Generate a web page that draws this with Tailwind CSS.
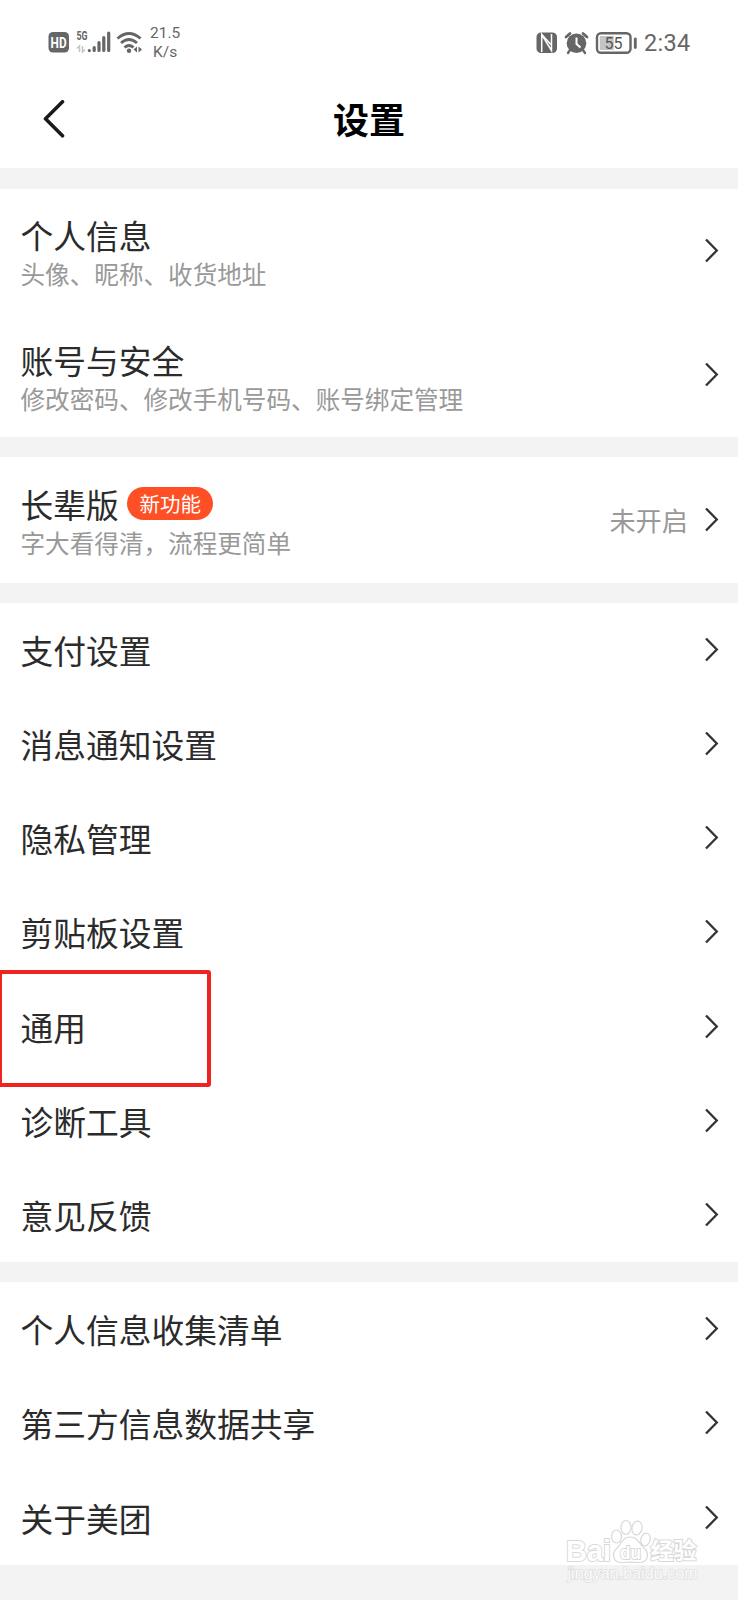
<!DOCTYPE html>
<html lang="zh-CN">
<head>
<meta charset="utf-8">
<title>设置</title>
<script src="https://cdn.jsdelivr.net/npm/@tailwindcss/browser@4"></script>
</head>
<body class="relative h-[1600px] w-[738px] overflow-hidden bg-[#f3f3f3] font-['Noto_Sans_CJK_SC',sans-serif] text-[#2b2b2b]">
<svg class="hidden"><symbol id="chev" viewBox="0 0 14 24"><path d="M1 0.500L11.800 11.500L1 22.500" fill="none" stroke="#333" stroke-width="2.300"/></symbol></svg>

<div class="h-[168px] bg-white">
  <header class="flex h-[84px] items-center justify-between pr-[48px] pl-[48px] text-[#666]">
    <div class="flex items-center">
      <svg width="98" height="60" viewBox="0 0 98 60">
        <rect x="0.5" y="20" width="20.500" height="20.500" rx="4.500" fill="#666"/>
        <text x="2.600" y="35.500" font-family="Roboto" font-weight="700" font-size="14" textLength="16" lengthAdjust="spacingAndGlyphs" fill="#fff">HD</text>
        <text x="28.500" y="28.300" font-family="Roboto" font-weight="700" font-size="12" textLength="11" lengthAdjust="spacingAndGlyphs" fill="#666">5G</text>
        <path d="M31.500 40V34L29 36.500M34.500 34V40L37 37.500" fill="none" stroke="#c4c4c4" stroke-width="1.500"/>
        <g stroke="#666" stroke-width="3.200" stroke-linecap="round">
          <path d="M41.300 38.500V38.600M46.200 38.500V35.500M51 38.500V30.500M55.800 38.500V25.500M60.700 38.500V21"/>
        </g>
        <g fill="none" stroke="#666" stroke-width="2.800">
          <path d="M69.500 26.500Q81 16.500 92.500 26.500M73 31Q81 24 89 31M76.500 35.500Q81 31.500 85.500 35.500"/>
        </g>
        <circle cx="81" cy="38.800" r="2.200" fill="#666"/>
        <path d="M89 34.500V40.500L85.500 37.500ZM90.500 34.500V40.500L94 37.500Z" fill="#666"/>
      </svg>
      <div class="ml-[4px] pt-px text-center font-[Roboto] text-[15.500px] leading-[18.500px]">21.5<br>K/s</div>
    </div>
    <div class="flex items-center pt-px">
      <svg width="102" height="60" viewBox="0 0 102 60">
        <rect x="0.500" y="19.500" width="20.500" height="20.500" rx="4.500" fill="#666"/>
        <path d="M5.700 39V21.500L15.500 37.500V21" fill="none" stroke="#fff" stroke-width="1.500"/>
        <path d="M5.700 21.500L15 31.500" fill="none" stroke="#fff" stroke-width="1.500"/>
        <circle cx="40.500" cy="30.300" r="9.800" fill="#666"/>
        <path d="M34 37L32 40M47 37L49 40" stroke="#666" stroke-width="2.300" stroke-linecap="round"/>
        <path d="M30 24L34 20.500M51 24L47 20.500" stroke="#666" stroke-width="2.700" stroke-linecap="round"/>
        <path d="M40.500 24.500V31L44.500 34.500" fill="none" stroke="#fff" stroke-width="2"/>
        <rect x="61" y="20.200" width="33.500" height="19.600" rx="4" fill="#fff" stroke="#666" stroke-width="2.400"/>
        <rect x="63.800" y="23" width="14" height="14" fill="#c4c4c4"/>
        <text x="68.500" y="36" font-family="Roboto" font-size="17" textLength="18" lengthAdjust="spacingAndGlyphs" fill="#555">55</text>
        <path d="M99.300 26V34.500" stroke="#666" stroke-width="2.800" stroke-linecap="round"/>
      </svg>
      <span class="ml-[6px] w-[46px] font-[Roboto] text-[23.500px] leading-[28px] tracking-[0.300px]">2:34</span>
    </div>
  </header>
  <nav class="grid h-[72px] grid-cols-[120px_1fr_120px] items-center">
    <svg class="-mt-px ml-[42px]" width="24" height="40" viewBox="0 0 24 40"><path d="M20.500 1.800L3.500 18.800L20.500 35.800" fill="none" stroke="#1a1a1a" stroke-width="3.600" stroke-linecap="round" stroke-linejoin="round"/></svg>
    <h1 class="-mt-[5px] text-center text-[36px] leading-[44px] font-bold text-black">设置</h1>
  </nav>
</div>

<main class="flex flex-col gap-[20px] pt-[20.500px] text-[32.750px] leading-[40px]">
  <section class="h-[248.500px] bg-white">
    <div class="flex h-[124.500px] items-center justify-between pr-[19px] pl-[20.500px]">
      <div class="pt-[5px]"><div>个人信息</div><div class="text-[24.600px] leading-[36px] text-[#999]">头像、昵称、收货地址</div></div>
      <svg width="14" height="24"><use href="#chev"/></svg>
    </div>
    <div class="flex h-[124.500px] items-center justify-between pr-[19px] pl-[20.500px]">
      <div class="pt-[5px]"><div>账号与安全</div><div class="text-[24.600px] leading-[36px] text-[#999]">修改密码、修改手机号码、账号绑定管理</div></div>
      <svg width="14" height="24"><use href="#chev"/></svg>
    </div>
  </section>
  <section class="flex h-[126px] items-center justify-between bg-white pr-[19px] pl-[20.500px]">
    <div class="pt-[3px]">
      <div class="flex items-start">长辈版<span class="mt-[3px] ml-[8px] flex h-[33px] w-[86px] items-center justify-center rounded-full bg-[#ff4f24] pl-px text-[20.500px] leading-[33px] text-white">新功能</span></div>
      <div class="text-[24.600px] leading-[36px] text-[#999]">字大看得清，流程更简单</div>
    </div>
    <div class="flex items-center gap-[17px]"><span class="-mt-px text-[26.200px] text-[#999]">未开启</span><svg width="14" height="24"><use href="#chev"/></svg></div>
  </section>
  <section class="grid h-[659px] grid-rows-7 bg-white pr-[19px] pl-[20.500px]">
    <div class="flex items-center justify-between"><span>支付设置</span><svg width="14" height="24"><use href="#chev"/></svg></div>
    <div class="flex items-center justify-between"><span>消息通知设置</span><svg width="14" height="24"><use href="#chev"/></svg></div>
    <div class="flex items-center justify-between"><span>隐私管理</span><svg width="14" height="24"><use href="#chev"/></svg></div>
    <div class="flex items-center justify-between"><span>剪贴板设置</span><svg width="14" height="24"><use href="#chev"/></svg></div>
    <div class="flex items-center justify-between"><span>通用</span><svg width="14" height="24"><use href="#chev"/></svg></div>
    <div class="flex items-center justify-between"><span>诊断工具</span><svg width="14" height="24"><use href="#chev"/></svg></div>
    <div class="flex items-center justify-between"><span>意见反馈</span><svg width="14" height="24"><use href="#chev"/></svg></div>
  </section>
  <section class="grid h-[283px] grid-rows-3 bg-white pr-[19px] pl-[20.500px]">
    <div class="flex items-center justify-between"><span>个人信息收集清单</span><svg width="14" height="24"><use href="#chev"/></svg></div>
    <div class="flex items-center justify-between"><span>第三方信息数据共享</span><svg width="14" height="24"><use href="#chev"/></svg></div>
    <div class="flex items-center justify-between"><span>关于美团</span><svg width="14" height="24"><use href="#chev"/></svg></div>
  </section>
</main>

<!-- highlight frame -->
<div class="absolute top-[970px] left-[-2px] h-[117px] w-[213px] rounded-[3px] border-4 border-[#ee2420]"></div>

<!-- watermark -->
<svg class="absolute top-[1510px] left-[560px]" width="150" height="80" viewBox="0 0 150 80">
  <g fill="#fff" stroke="#d9d9d9" stroke-width="1.200">
    <ellipse cx="56.500" cy="26.500" rx="5" ry="6.500"/>
    <ellipse cx="66" cy="17.500" rx="5" ry="7"/>
    <ellipse cx="77" cy="18" rx="5" ry="7" transform="rotate(10 77 18)"/>
    <ellipse cx="85.500" cy="29.500" rx="4.700" ry="6.500" transform="rotate(15 85.500 29.500)"/>
    <path d="M70 27C77 27 79 33 84 38C90 44 88 53 79 52.500C73 52 67 52 62 52.500C53 53 51 44 57 38C62 33 63 27 70 27Z"/>
    <g paint-order="stroke" stroke-width="2" font-weight="700" font-family="'Liberation Sans','Noto Sans CJK SC',sans-serif">
      <text x="6" y="51" font-size="30" textLength="45" lengthAdjust="spacingAndGlyphs">Bai</text>
      <text x="60" y="49" font-size="19" textLength="21" lengthAdjust="spacingAndGlyphs">du</text>
      <text x="90.500" y="49" font-size="23" textLength="46" lengthAdjust="spacingAndGlyphs">经验</text>
    </g>
  </g>
  <text x="7.500" y="68.500" font-size="16" textLength="130" font-family="'Liberation Sans',sans-serif" fill="#fafafa" stroke="#e0e0e0" stroke-width="1.600" paint-order="stroke">jingyan.baidu.com</text>
</svg>
</body>
</html>
